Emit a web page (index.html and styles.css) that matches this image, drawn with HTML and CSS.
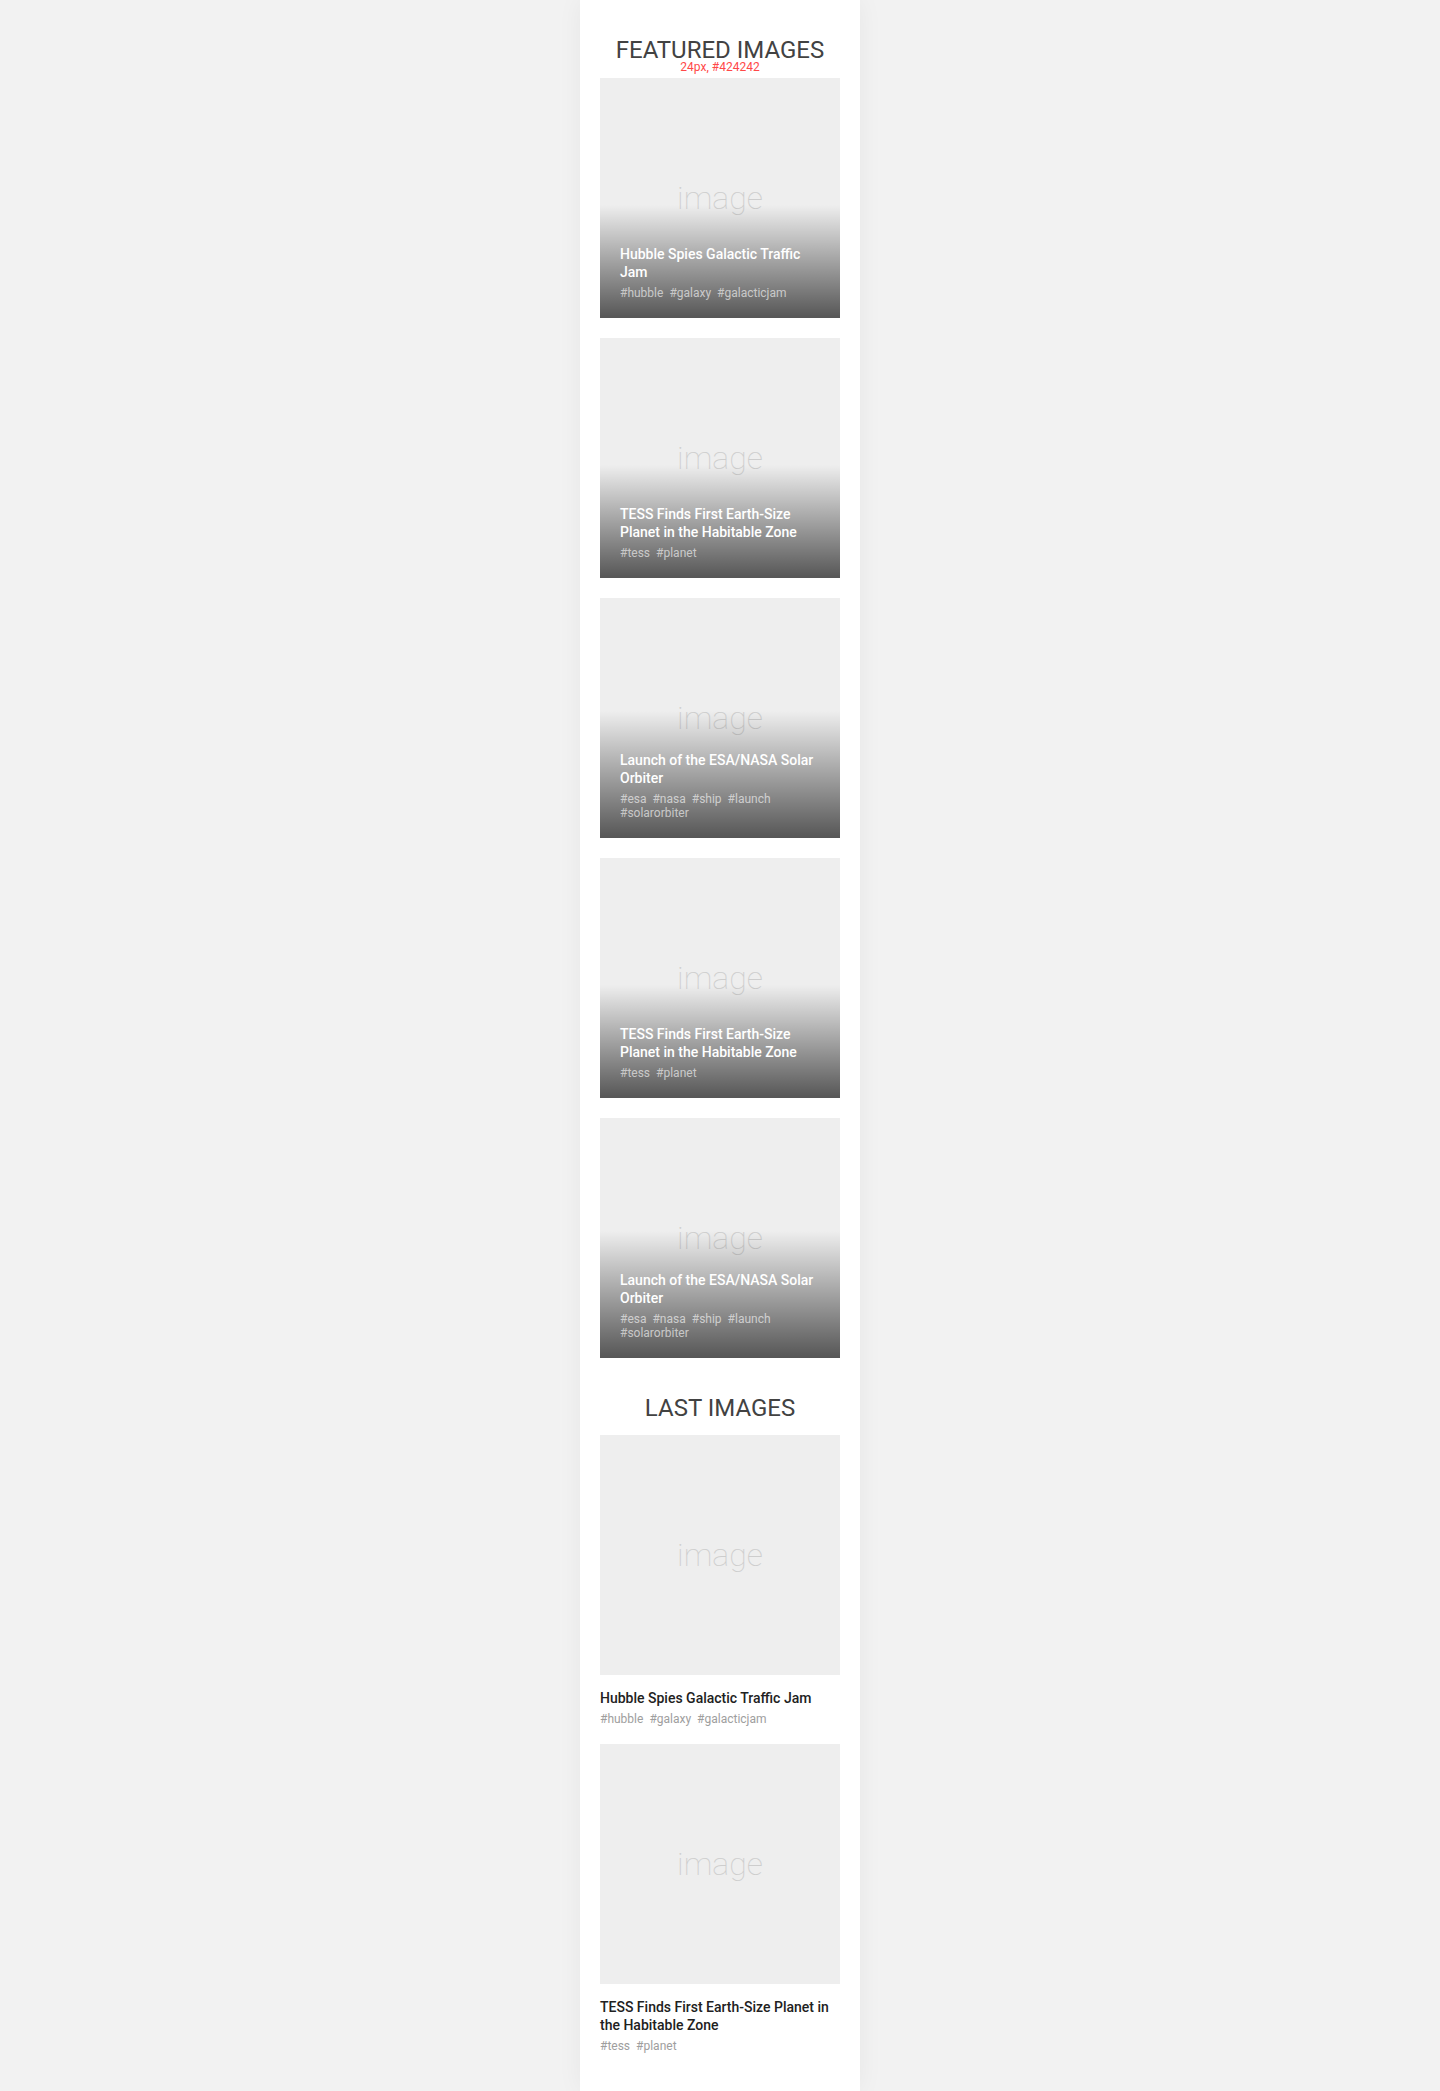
FILE: index.html
```html
<!DOCTYPE html>
<html lang="en">
<head>
<meta charset="utf-8">
<title>Images</title>
<link rel="stylesheet" href="styles.css">
</head>
<body>
<main class="page">
  <section class="section">
    <h2 class="section-title">FEATURED IMAGES<span class="spec">24px, #424242</span></h2>
    <div class="featured-list">
      <article class="feature-card">
        <div class="placeholder">image</div>
        <div class="feature-caption">
          <h3 class="card-title">Hubble Spies Galactic Traffic Jam</h3>
          <ul class="tags"><li>#hubble</li><li>#galaxy</li><li>#galacticjam</li></ul>
        </div>
      </article>
      <article class="feature-card">
        <div class="placeholder">image</div>
        <div class="feature-caption">
          <h3 class="card-title">TESS Finds First Earth-Size Planet in the Habitable Zone</h3>
          <ul class="tags"><li>#tess</li><li>#planet</li></ul>
        </div>
      </article>
      <article class="feature-card">
        <div class="placeholder">image</div>
        <div class="feature-caption">
          <h3 class="card-title">Launch of the ESA/NASA Solar Orbiter</h3>
          <ul class="tags"><li>#esa</li><li>#nasa</li><li>#ship</li><li>#launch</li><li>#solarorbiter</li></ul>
        </div>
      </article>
      <article class="feature-card">
        <div class="placeholder">image</div>
        <div class="feature-caption">
          <h3 class="card-title">TESS Finds First Earth-Size Planet in the Habitable Zone</h3>
          <ul class="tags"><li>#tess</li><li>#planet</li></ul>
        </div>
      </article>
      <article class="feature-card">
        <div class="placeholder">image</div>
        <div class="feature-caption">
          <h3 class="card-title">Launch of the ESA/NASA Solar Orbiter</h3>
          <ul class="tags"><li>#esa</li><li>#nasa</li><li>#ship</li><li>#launch</li><li>#solarorbiter</li></ul>
        </div>
      </article>
    </div>
  </section>

  <section class="section last">
    <h2 class="section-title">LAST IMAGES</h2>
    <div class="last-list">
      <article class="last-card">
        <div class="placeholder">image</div>
        <div class="last-caption">
          <h3 class="card-title">Hubble Spies Galactic Traffic Jam</h3>
          <ul class="tags"><li>#hubble</li><li>#galaxy</li><li>#galacticjam</li></ul>
        </div>
      </article>
      <article class="last-card">
        <div class="placeholder">image</div>
        <div class="last-caption">
          <h3 class="card-title">TESS Finds First Earth-Size Planet in the Habitable Zone</h3>
          <ul class="tags"><li>#tess</li><li>#planet</li></ul>
        </div>
      </article>
    </div>
  </section>
</main>
</body>
</html>
```

FILE: styles.css
```css
html, body {
  margin: 0;
  padding: 0;
}

body {
  background: #f2f2f2;
  font-family: Roboto, "Noto Sans", "Liberation Sans", Arial, sans-serif;
}

.page {
  box-sizing: border-box;
  width: 280px;
  min-height: 100vh;
  margin: 0 auto;
  padding: 38px 20px 20px;
  background: #ffffff;
  box-shadow: 0 0 24px rgba(0, 0, 0, 0.05);
}

.section + .section {
  margin-top: 38px;
}

.section-title {
  position: relative;
  margin: 0 0 16px;
  font-size: 24px;
  line-height: 24px;
  font-weight: 400;
  color: #424242;
  text-align: center;
}

.last .section-title {
  margin-bottom: 15px;
}

.spec {
  position: absolute;
  left: 0;
  right: 0;
  top: 24px;
  font-size: 12px;
  line-height: 10px;
  color: #ff4848;
  text-align: center;
}

.featured-list {
  display: flex;
  flex-direction: column;
  gap: 20px;
}

.feature-card {
  display: grid;
}

.feature-card > .placeholder,
.feature-card > .feature-caption {
  grid-area: 1 / 1;
}

.placeholder {
  height: 240px;
  background: #eeeeee;
  display: flex;
  align-items: center;
  justify-content: center;
  font-size: 32px;
  font-weight: 100;
  color: #cdcdcd;
}

.feature-caption {
  align-self: end;
  padding: 40px 20px 18px;
  background: linear-gradient(to bottom, rgba(0, 0, 0, 0) 0%, rgba(0, 0, 0, 0.64) 100%);
}

.card-title {
  margin: 0;
  font-size: 14px;
  line-height: 18px;
  font-weight: 500;
  color: #ffffff;
}

.tags {
  list-style: none;
  margin: 5px 0 0;
  padding: 0;
  display: flex;
  flex-wrap: wrap;
  column-gap: 6px;
  font-size: 12px;
  line-height: 14px;
  color: rgba(255, 255, 255, 0.62);
}

.last-list {
  display: flex;
  flex-direction: column;
  gap: 18px;
}

.last-caption {
  padding-top: 14px;
}

.last-caption .card-title {
  color: #212121;
}

.last-caption .tags {
  color: #9e9e9e;
}
```
